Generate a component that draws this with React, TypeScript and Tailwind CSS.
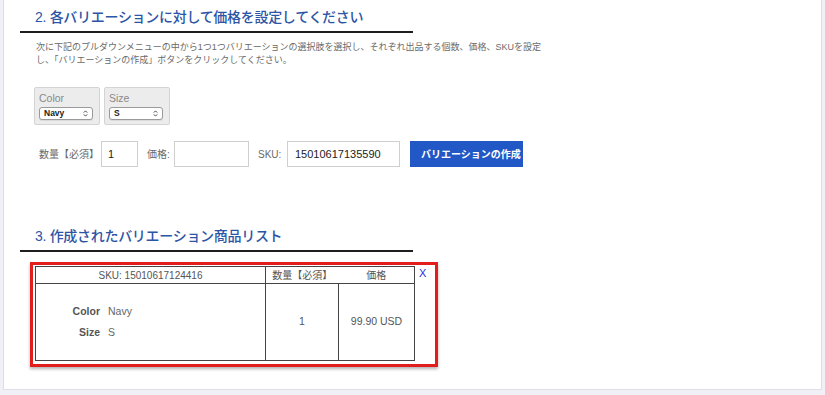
import React from 'react';

const font = { fontFamily: '"Liberation Sans", "Noto Sans CJK JP", sans-serif' };

function SelectArrows() {
  return (
    <svg width="5" height="7" viewBox="0 0 5 7" className="text-[#333]">
      <path d="M0.8 2.6 L2.5 0.9 L4.2 2.6" fill="none" stroke="currentColor" strokeWidth="0.9" />
      <path d="M0.8 4.4 L2.5 6.1 L4.2 4.4" fill="none" stroke="currentColor" strokeWidth="0.9" />
    </svg>
  );
}

function OptionBox({ label, value }: { label: string; value: string }) {
  return (
    <div className="w-[66px] h-[38px] bg-[#ececec] border border-[#d4d4d4] rounded-[2px] px-[4px] pt-[3px]">
      <div className="text-[10.5px] leading-[14px] text-[#8a8a8a]">{label}</div>
      <div className="mt-[2px] w-[54px] h-[13px] bg-white border border-[#9a9a9a] rounded-[3px] flex items-center justify-between px-[4px] shadow-[0_1px_0_rgba(0,0,0,0.08)]">
        <span className="text-[8.5px] font-bold text-[#222] leading-none">{value}</span>
        <SelectArrows />
      </div>
    </div>
  );
}

function SectionHeading({ children }: { children: React.ReactNode }) {
  return (
    <div className="w-[393px] border-b-2 border-[#1e1e1e] pl-[15px] pb-[4px]">
      <h2 className="text-[14px] leading-[20px] font-medium text-[#2d55a5] tracking-[-0.3px]">{children}</h2>
    </div>
  );
}

export default function App() {
  return (
    <div className="min-h-screen bg-[#f0f0f6] px-[3px]" style={font}>
      <div className="h-[390px] bg-white border-x border-b border-[#dedee6] pl-[16px] pt-[7px]">
        {/* Section 2 */}
        <SectionHeading>2. 各バリエーションに対して価格を設定してください</SectionHeading>

        <p className="mt-[8px] ml-[16px] text-[9px] leading-[13px] text-[#6a6a6a] whitespace-nowrap">
          次に下記のプルダウンメニューの中から1つ1つバリエーションの選択肢を選択し、それぞれ出品する個数、価格、SKUを設定
          <br />
          し、「バリエーションの作成」ボタンをクリックしてください。
        </p>

        <div className="mt-[20px] ml-[14px] flex gap-[4px]">
          <OptionBox label="Color" value="Navy" />
          <OptionBox label="Size" value="S" />
        </div>

        <div className="mt-[16px] ml-[19px] flex items-center text-[10px] text-[#6a6a6a]">
          <span className="w-[62px]">数量【必須】</span>
          <div className="w-[37px] h-[26px] border border-[#cfcfcf] flex items-center px-[6px] text-[11px] text-[#222]">1</div>
          <span className="ml-[9px] w-[27px]">価格:</span>
          <div className="w-[75px] h-[26px] border border-[#cfcfcf]" />
          <span className="ml-[9px] w-[29px]">SKU:</span>
          <div className="w-[113px] h-[26px] border border-[#cfcfcf] flex items-center px-[7px] text-[11px] text-[#222]">15010617135590</div>
          <div className="ml-[10px] w-[113px] h-[26px] bg-[#2158c6] overflow-hidden flex items-center pl-[11px]">
            <span className="text-[10px] font-bold text-white whitespace-nowrap">バリエーションの作成</span>
          </div>
        </div>

        {/* Section 3 */}
        <div className="mt-[59px]">
          <SectionHeading>3. 作成されたバリエーション商品リスト</SectionHeading>
        </div>

        <div className="mt-[10px] ml-[10px] w-[408px] border-[3px] border-[#e31c1c] shadow-[0_2px_3px_rgba(0,0,0,0.3)] pl-[2px] pt-[1px] pb-[3px] flex">
          <table className="w-[380px] border-collapse border border-[#444] text-[10px] text-[#555]">
            <thead>
              <tr className="h-[17px]">
                <th className="w-[230px] border border-[#444] font-normal text-center">SKU: 15010617124416</th>
                <th className="w-[73px] border-b border-[#444] font-normal text-center">数量【必須】</th>
                <th className="border-b border-[#444] font-normal text-center">価格</th>
              </tr>
            </thead>
            <tbody>
              <tr className="h-[77px]">
                <td className="border border-[#444] align-middle">
                  <div className="grid grid-cols-[64px_1fr] gap-x-[8px] gap-y-[8px] text-[10.5px] leading-[13px]">
                    <span className="text-right font-bold text-[#555]">Color</span>
                    <span className="text-[#666]">Navy</span>
                    <span className="text-right font-bold text-[#555]">Size</span>
                    <span className="text-[#666]">S</span>
                  </div>
                </td>
                <td className="border border-[#444] text-center text-[10.5px]">1</td>
                <td className="border border-[#444] text-center text-[10.5px]">99.90 USD</td>
              </tr>
            </tbody>
          </table>
          <span className="ml-[4px] mt-[1px] text-[11px] leading-[12px] text-[#2b2bd9] font-medium">X</span>
        </div>
      </div>
    </div>
  );
}
